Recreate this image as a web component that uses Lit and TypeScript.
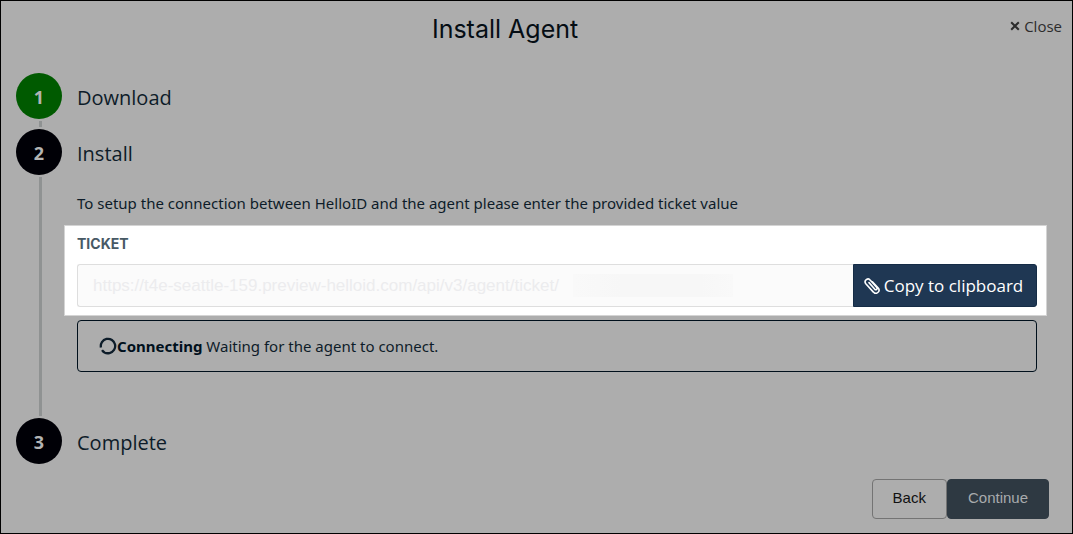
import { LitElement, html, css, svg } from "lit";
import { customElement, property, state } from "lit/decorators.js";

@customElement("wizard-step")
class WizardStep extends LitElement {
  @property() number = "";
  @property() heading = "";
  @property({ type: Boolean, reflect: true }) done = false;
  @property({ type: Boolean, reflect: true }) last = false;

  static styles = css`
    :host {
      display: grid;
      grid-template-columns: 46px minmax(0, 1fr);
      column-gap: 15px;
      color: #0d1c29;
    }
    .rail {
      display: flex;
      flex-direction: column;
      align-items: center;
    }
    .circle {
      box-sizing: border-box;
      width: 46px;
      height: 46px;
      border-radius: 50%;
      background: #000006;
      color: #b4b4b4;
      font: 700 18px/48px "Open Sans", sans-serif;
      text-align: center;
    }
    :host([done]) .circle {
      background: #005a00;
    }
    .line {
      flex: 1;
      width: 3px;
      min-height: 6px;
      margin: 2px 0 2px 2px;
      background: #8f9292;
    }
    :host([last]) .line {
      display: none;
    }
    h2 {
      margin: 0;
      font: 400 20px/50px "Open Sans", sans-serif;
    }
  `;

  render() {
    return html`
      <div class="rail">
        <div class="circle">${this.number}</div>
        <div class="line"></div>
      </div>
      <div>
        <h2>${this.heading}</h2>
        <slot></slot>
      </div>
    `;
  }
}

const closeIcon = svg`<path d="M1.2 1.2 L8.8 8.8 M8.8 1.2 L1.2 8.8" fill="none" stroke="currentColor" stroke-width="2"/>`;
const clipIcon = svg`<path d="M5 4.6 L10.8 11.2 a1.3 1.3 0 0 0 2-1.8 L6.3 2.2 a2.8 2.8 0 0 0-4.5 3.5 L9.4 14.1 a3.1 3.1 0 0 0 4.8-4 L8.4 3.8" fill="none" stroke="currentColor" stroke-width="1.6" stroke-linecap="round" stroke-linejoin="round"/>`;
const spinnerIcon = svg`<circle cx="9" cy="9" r="7.2" fill="none" stroke="currentColor" stroke-width="2.3" stroke-dasharray="42.2 3.04" transform="rotate(168 9 9)"/>`;

@customElement("app-root")
class AppRoot extends LitElement {
  @state() private ticket = "https://t4e-seattle-159.preview-helloid.com/api/v3/agent/ticket/";

  static styles = css`
    :host {
      display: block;
      box-sizing: border-box;
      min-height: 100vh;
      border: 1px solid #000;
      padding: 0 15px;
      background: #adadad;
      color: #0d1c29;
      font-family: "Noto Sans", sans-serif;
    }
    header {
      display: grid;
      grid-template-columns: 1fr auto;
      column-gap: 16px;
      align-items: center;
      height: 56px;
      margin-right: -5px;
    }
    h1 {
      margin: 0;
      color: #050d14;
      font: 400 25px/32px Inter, sans-serif;
      text-align: center;
    }
    button {
      margin: 0;
      cursor: pointer;
    }
    .close {
      display: flex;
      align-items: center;
      gap: 4px;
      padding: 0;
      margin-bottom: 7px;
      border: 0;
      background: none;
      color: #2c2c2c;
      font: 400 15px/20px "Open Sans", sans-serif;
    }
    main {
      padding: 16px 20px 0 0;
    }
    .intro {
      margin: 12px 0 0;
      font-size: 15px;
      line-height: 24px;
    }
    .spotlight {
      margin: 10px -10px 0 -13px;
      padding: 8px 9px 8px 12px;
      border: 1px solid #d4d4d4;
      background: #fff;
    }
    .spotlight label {
      display: block;
      margin-bottom: 10px;
      color: #475965;
      font: 700 14px/20px Inter, sans-serif;
    }
    .field {
      position: relative;
      display: flex;
      height: 43px;
    }
    .field input {
      box-sizing: border-box;
      flex: 1;
      min-width: 0;
      padding: 0 15px;
      border: 1px solid #dedede;
      border-right: 0;
      border-radius: 3px 0 0 3px;
      background: #fbfbfb;
      color: #ececee;
      font: 400 17px/24px "Liberation Sans", sans-serif;
    }
    .smudge {
      position: absolute;
      left: 496px;
      top: 10px;
      width: 160px;
      height: 23px;
      background: linear-gradient(90deg, #f9f9f9, #f7f7f7 30%, #f7f7f7 80%, #f9f9f9);
    }
    .copy {
      box-sizing: border-box;
      width: 184px;
      display: flex;
      align-items: center;
      justify-content: center;
      gap: 4px;
      padding: 0 3px 0 0;
      border: 1px solid #152c46;
      border-radius: 0 3px 3px 0;
      background: #1f3753;
      color: #fff;
      font: 400 17px/24px "Open Sans", sans-serif;
    }
    .status {
      display: flex;
      align-items: center;
      margin: 4px 0 46px;
      padding: 13px 21px;
      border: 1px solid #00101c;
      border-radius: 4px;
      font-size: 15px;
      line-height: 24px;
    }
    .status p {
      margin: 0;
    }
    .status strong {
      color: #00101c;
    }
    footer {
      display: flex;
      justify-content: flex-end;
      padding: 11px 8px 14px 0;
    }
    footer button {
      height: 40px;
      padding: 0 20px 2px;
      border: 1px solid #747474;
      border-radius: 4px;
      background: #adadad;
      color: #111;
      font: 400 15px/20px "Liberation Sans", sans-serif;
    }
    footer .primary {
      border-color: #2e3942;
      background: #2e3942;
      color: #a8abad;
    }
  `;

  private copy() {
    navigator.clipboard?.writeText(this.ticket);
  }

  render() {
    return html`
      <header>
        <h1>Install Agent</h1>
        <button class="close" type="button">
          <svg width="10" height="10" viewBox="0 0 10 10" aria-hidden="true">${closeIcon}</svg>
          Close
        </button>
      </header>
      <main>
        <wizard-step number="1" heading="Download" done></wizard-step>
        <wizard-step number="2" heading="Install">
          <p class="intro">
            To setup the connection between HelloID and the agent please enter the provided ticket value
          </p>
          <div class="spotlight">
            <label for="ticket">TICKET</label>
            <div class="field">
              <input id="ticket" type="text" readonly .value=${this.ticket} />
              <span class="smudge"></span>
              <button class="copy" type="button" @click=${this.copy}>
                <svg width="16" height="16" viewBox="0 0 16 16" aria-hidden="true">${clipIcon}</svg>
                Copy to clipboard
              </button>
            </div>
          </div>
          <div class="status" role="status">
            <svg width="18" height="18" viewBox="0 0 18 18" aria-hidden="true">${spinnerIcon}</svg>
            <p><strong>Connecting</strong> Waiting for the agent to connect.</p>
          </div>
        </wizard-step>
        <wizard-step number="3" heading="Complete" last></wizard-step>
      </main>
      <footer>
        <button type="button">Back</button>
        <button class="primary" type="button">Continue</button>
      </footer>
    `;
  }
}
